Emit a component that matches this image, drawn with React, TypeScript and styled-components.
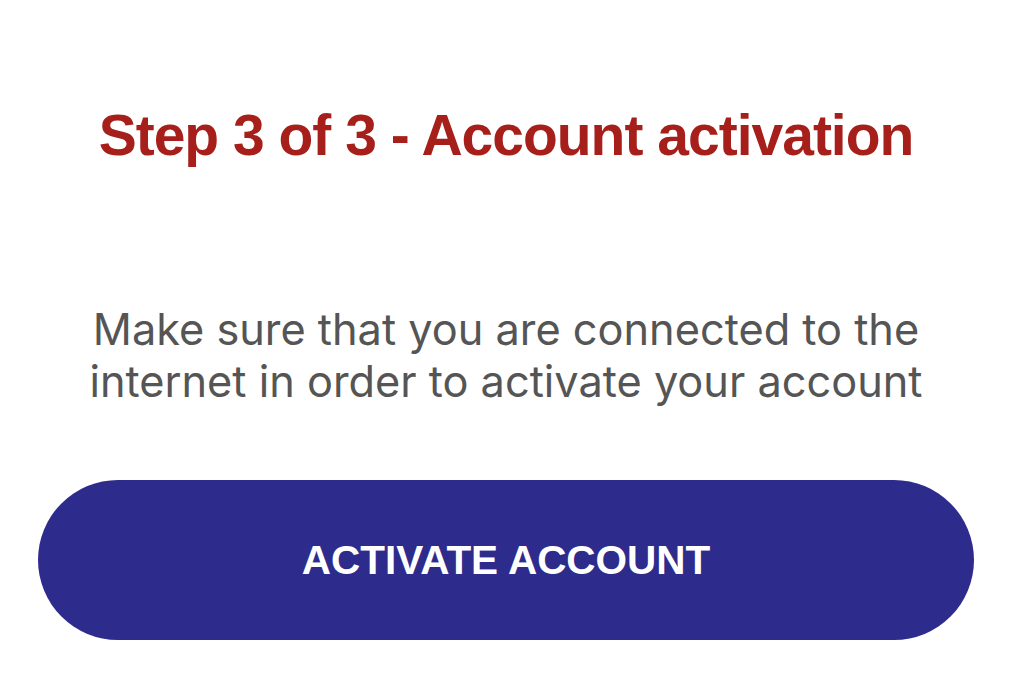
import React from 'react';
import styled, { createGlobalStyle } from 'styled-components';

const Global = createGlobalStyle`
	html, body {
		margin: 0;
		padding: 0;
		background: #ffffff;
	}
`;

const Page = styled.div`
	width: 1024px;
	height: 677px;
	box-sizing: border-box;
	padding: 100px 50px 0 38px;
	display: flex;
	flex-direction: column;
	align-items: center;
	background: #ffffff;
	overflow: hidden;
`;

const Title = styled.h1`
	margin: 0;
	font-family: "Liberation Sans", Arial, sans-serif;
	font-weight: 700;
	font-size: 57px;
	line-height: 70px;
	letter-spacing: -1px;
	color: #a61f1a;
	text-align: center;
`;

const Message = styled.p`
	margin: 133px 0 0 0;
	font-family: Inter, "Noto Sans", sans-serif;
	font-weight: 400;
	font-size: 43.3px;
	line-height: 52px;
	color: #555555;
	text-align: center;
`;

const Button = styled.button`
	margin-top: 73px;
	width: 100%;
	height: 160px;
	border: none;
	border-radius: 80px;
	background: #2d2b8c;
	color: #ffffff;
	font-family: "Liberation Sans", Arial, sans-serif;
	font-weight: 700;
	font-size: 40.5px;
	cursor: pointer;
`;

function App() {
	return (
		<Page>
			<Global />
			<Title>Step 3 of 3 - Account activation</Title>
			<Message>
				Make sure that you are connected to the
				<br />
				internet in order to activate your account
			</Message>
			<Button>ACTIVATE ACCOUNT</Button>
		</Page>
	);
}

export default App;
